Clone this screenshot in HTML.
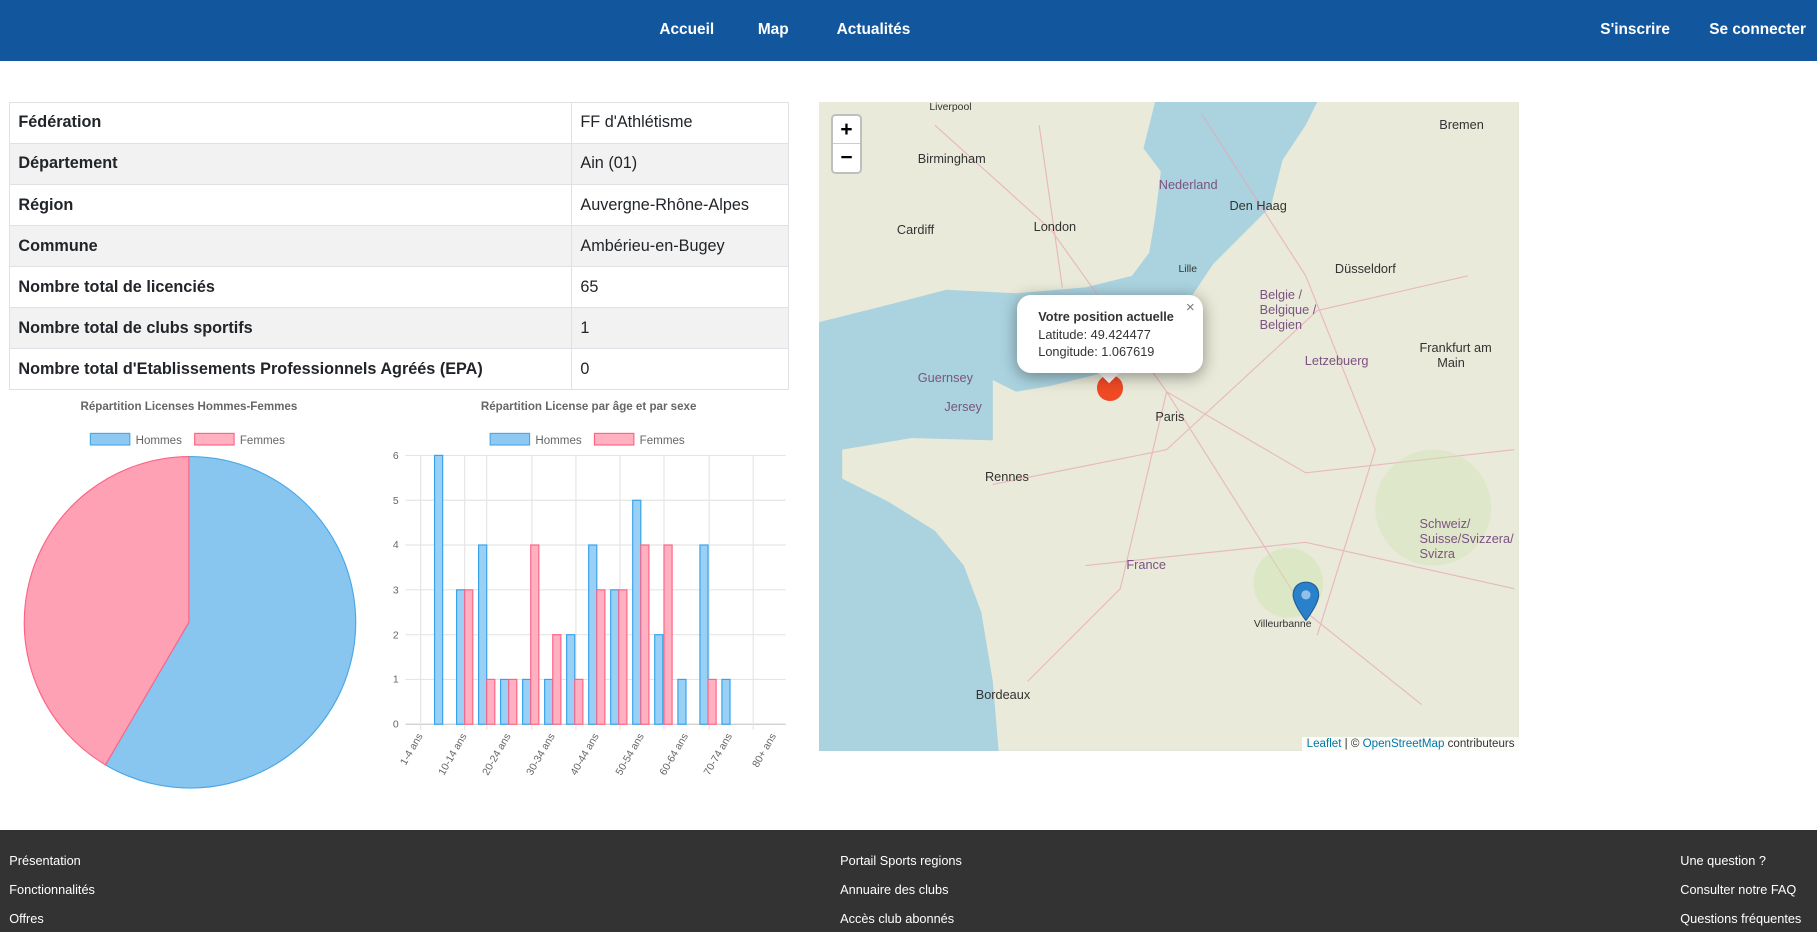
<!DOCTYPE html>
<html><head><meta charset="utf-8">
<style>
*{box-sizing:border-box;margin:0;padding:0}
html,body{width:1817px;height:932px;overflow:hidden;background:#fff}
#w{zoom:1.1588;width:1568px;height:804px;position:relative;font-family:"Liberation Sans",sans-serif;color:#212529}
.hd{position:absolute;left:0;top:0;width:1568px;height:53px;background:#12579e}
.hd a{position:absolute;top:18px;color:#fff;font-weight:bold;font-size:13.3px;text-decoration:none}
table{position:absolute;left:8px;top:88px;width:673px;border-collapse:collapse;font-size:14px}
td{border:1px solid #dee2e6;height:35.4px;padding:0 7px}
td:first-child{font-weight:bold;width:485px}
tr:nth-child(even) td{background:#f2f2f2}
.map{position:absolute;left:707px;top:88px;width:604px;height:560px;overflow:hidden;background:#aad3df}
.ft{position:absolute;left:0;top:716px;width:1568px;height:88px;background:#333}
.ft span{position:absolute;color:#fff;font-size:11px}
.lbl{position:absolute;font-size:9px;color:#333}
</style></head><body><div id="w">
<div class="hd">
<a style="left:569px">Accueil</a><a style="left:654px">Map</a><a style="left:722px">Actualités</a>
<a style="left:1381px">S'inscrire</a><a style="left:1475px">Se connecter</a>
</div>
<table>
<tr><td>Fédération</td><td>FF d'Athlétisme</td></tr>
<tr><td>Département</td><td>Ain (01)</td></tr>
<tr><td>Région</td><td>Auvergne-Rhône-Alpes</td></tr>
<tr><td>Commune</td><td>Ambérieu-en-Bugey</td></tr>
<tr><td>Nombre total de licenciés</td><td>65</td></tr>
<tr><td>Nombre total de clubs sportifs</td><td>1</td></tr>
<tr><td>Nombre total d'Etablissements Professionnels Agréés (EPA)</td><td>0</td></tr>
</table>

<svg style="position:absolute;left:0;top:340px" width="700" height="370" font-family="Liberation Sans, sans-serif">
<text x="163" y="14" text-anchor="middle" font-size="10" font-weight="bold" fill="#666">Répartition Licenses Hommes-Femmes</text>
<rect x="78" y="34" width="34" height="10" fill="#8ec9f2" stroke="#4aa8e8"/><text x="117" y="43" font-size="10" fill="#666">Hommes</text>
<rect x="168" y="34" width="34" height="10" fill="#ffb1c1" stroke="#ff6384"/><text x="207" y="43" font-size="10" fill="#666">Femmes</text>
<path d="M163,197 L163,54 A143,143 0 1,1 91,320 Z" fill="#88c6f0" stroke="#4aa8e8"/>
<path d="M163,197 L91,320 A143,143 0 0,1 163,54 Z" fill="#ffa1b5" stroke="#ff6384"/>
<text x="508" y="14" text-anchor="middle" font-size="10" font-weight="bold" fill="#666">Répartition License par âge et par sexe</text>
<rect x="423" y="34" width="34" height="10" fill="#8ec9f2" stroke="#4aa8e8"/><text x="462" y="43" font-size="10" fill="#666">Hommes</text>
<rect x="513" y="34" width="34" height="10" fill="#ffb1c1" stroke="#ff6384"/><text x="552" y="43" font-size="10" fill="#666">Femmes</text>
<g stroke="#e5e5e5">
<line x1="350" y1="53" x2="678" y2="53"/><line x1="350" y1="91.7" x2="678" y2="91.7"/><line x1="350" y1="130.3" x2="678" y2="130.3"/><line x1="350" y1="169" x2="678" y2="169"/><line x1="350" y1="207.7" x2="678" y2="207.7"/><line x1="350" y1="246.3" x2="678" y2="246.3"/><line x1="350" y1="285" x2="678" y2="285" stroke="#ccc"/>
<line x1="363" y1="53" x2="363" y2="290"/><line x1="401" y1="53" x2="401" y2="290"/><line x1="420" y1="53" x2="420" y2="290"/><line x1="459" y1="53" x2="459" y2="290"/><line x1="497" y1="53" x2="497" y2="290"/><line x1="535" y1="53" x2="535" y2="290"/><line x1="573" y1="53" x2="573" y2="290"/><line x1="612" y1="53" x2="612" y2="290"/><line x1="650" y1="53" x2="650" y2="290"/>
</g>
<g font-size="9" fill="#666" text-anchor="end">
<text x="344" y="56">6</text><text x="344" y="95">5</text><text x="344" y="133">4</text><text x="344" y="172">3</text><text x="344" y="211">2</text><text x="344" y="249">1</text><text x="344" y="288">0</text>
</g>
<g fill="#9ad0f5" stroke="#36a2eb" stroke-width="1">
<rect x="375" y="53" width="7" height="232"/><rect x="394" y="169" width="7" height="116"/><rect x="413" y="130.3" width="7" height="154.7"/><rect x="432" y="246.3" width="7" height="38.7"/><rect x="451" y="246.3" width="7" height="38.7"/><rect x="470" y="246.3" width="7" height="38.7"/><rect x="489" y="207.7" width="7" height="77.3"/><rect x="508" y="130.3" width="7" height="154.7"/><rect x="527" y="169" width="7" height="116"/><rect x="546" y="91.7" width="7" height="193.3"/><rect x="565" y="207.7" width="7" height="77.3"/><rect x="585" y="246.3" width="7" height="38.7"/><rect x="604" y="130.3" width="7" height="154.7"/><rect x="623" y="246.3" width="7" height="38.7"/>
</g>
<g fill="#ffb1c1" stroke="#ff6384" stroke-width="1">
<rect x="401" y="169" width="7" height="116"/><rect x="420" y="246.3" width="7" height="38.7"/><rect x="439" y="246.3" width="7" height="38.7"/><rect x="458" y="130.3" width="7" height="154.7"/><rect x="477" y="207.7" width="7" height="77.3"/><rect x="496" y="246.3" width="7" height="38.7"/><rect x="515" y="169" width="7" height="116"/><rect x="534" y="169" width="7" height="116"/><rect x="553" y="130.3" width="7" height="154.7"/><rect x="573" y="130.3" width="7" height="154.7"/><rect x="611" y="246.3" width="7" height="38.7"/>
</g>
<g font-size="9" fill="#666" text-anchor="end">
<text transform="translate(365,295) rotate(-60)">1-4 ans</text><text transform="translate(403,295) rotate(-60)">10-14 ans</text><text transform="translate(441,295) rotate(-60)">20-24 ans</text><text transform="translate(479,295) rotate(-60)">30-34 ans</text><text transform="translate(517,295) rotate(-60)">40-44 ans</text><text transform="translate(556,295) rotate(-60)">50-54 ans</text><text transform="translate(594,295) rotate(-60)">60-64 ans</text><text transform="translate(632,295) rotate(-60)">70-74 ans</text><text transform="translate(670,295) rotate(-60)">80+ ans</text>
</g>
</svg>

<div class="map">
<svg width="604" height="560" style="position:absolute;left:0;top:0">
<path d="M0,0 L290,0 L280,40 L295,60 L290,100 L285,130 L270,150 L230,160 L170,165 L110,162 L60,175 L20,185 L0,190 Z" fill="#e9ead9"/>
<path d="M430,0 L604,0 L604,560 L155,560 L150,500 L140,440 L125,400 L100,370 L60,345 L20,325 L20,300 L80,290 L150,292 L150,240 L170,250 L200,245 L240,235 L290,200 L320,170 L340,140 L360,120 L390,90 L400,50 L420,20 Z" fill="#e9ead9"/>
<g stroke="#e9a3b5" stroke-width="1" fill="none" opacity=".7">
<path d="M100,20 L200,110 L300,250 L420,320 L600,300"/><path d="M190,20 L210,160"/><path d="M300,250 L260,420 L180,500"/><path d="M300,250 L420,440 L520,520"/><path d="M150,330 L300,300 L430,180 L560,150"/><path d="M230,400 L420,380 L600,420"/><path d="M330,10 L420,150 L480,300 L430,460"/>
</g>
<circle cx="405" cy="415" r="30" fill="#cfe3b4" opacity=".5"/><circle cx="530" cy="350" r="50" fill="#cfe3b4" opacity=".4"/>
</svg>
<div class="lbl" style="left:95px;top:0px">Liverpool</div><div class="lbl" style="left:85px;top:42px;font-size:11px">Birmingham</div><div class="lbl" style="left:185px;top:101px;font-size:11px">London</div><div class="lbl" style="left:67px;top:104px;font-size:11px">Cardiff</div><div class="lbl" style="left:293px;top:65px;font-size:11px;color:#7b5380">Nederland</div><div class="lbl" style="left:354px;top:83px;font-size:11px">Den Haag</div><div class="lbl" style="left:445px;top:137px;font-size:11px">Düsseldorf</div><div class="lbl" style="left:380px;top:160px;font-size:11px;color:#7b5380">Belgie /<br>Belgique /<br>Belgien</div><div class="lbl" style="left:419px;top:217px;font-size:11px;color:#7b5380">Letzebuerg</div><div class="lbl" style="left:290px;top:265px;font-size:11px">Paris</div><div class="lbl" style="left:143px;top:317px;font-size:11px">Rennes</div><div class="lbl" style="left:265px;top:393px;font-size:11px;color:#7b5380">France</div><div class="lbl" style="left:85px;top:231px;font-size:11px;color:#7b5380">Guernsey</div><div class="lbl" style="left:108px;top:256px;font-size:11px;color:#7b5380">Jersey</div><div class="lbl" style="left:135px;top:505px;font-size:11px">Bordeaux</div><div class="lbl" style="left:518px;top:357px;font-size:11px;color:#7b5380">Schweiz/<br>Suisse/Svizzera/<br>Svizra</div><div class="lbl" style="left:375px;top:446px">Villeurbanne</div><div class="lbl" style="left:518px;top:205px;font-size:11px">Frankfurt am<br>&nbsp;&nbsp;&nbsp;&nbsp;&nbsp;Main</div><div class="lbl" style="left:535px;top:13px;font-size:11px">Bremen</div><div class="lbl" style="left:310px;top:140px">Lille</div>
<div style="position:absolute;left:10px;top:10px;width:27px;height:52px;background:#fff;border:2px solid rgba(0,0,0,.25);border-radius:4px;font:bold 18px 'Liberation Sans';text-align:center;line-height:24px;color:#000">+<div style="border-top:1px solid #ccc">−</div></div>
<div style="position:absolute;left:240px;top:236px;width:22px;height:22px;border-radius:50%;background:#f04a25"></div>
<svg style="position:absolute;left:408px;top:413px" width="24" height="36"><path d="M12,1 C5,1 1,6 1,12 C1,20 12,34 12,34 C12,34 23,20 23,12 C23,6 19,1 12,1 Z" fill="#2a81cb" stroke="#1f5f96"/><circle cx="12" cy="12" r="4" fill="#fff" opacity=".5"/></svg>
<div style="position:absolute;left:243px;top:226px;width:14px;height:14px;background:#fff;transform:rotate(45deg)"></div>
<div style="position:absolute;left:171px;top:167px;width:160px;height:67px;background:#fff;border-radius:12px;box-shadow:0 3px 14px rgba(0,0,0,.4);padding:11px 10px 0 18px;font-size:11px;line-height:15px;color:#333;white-space:nowrap"><b>Votre position actuelle</b><br>Latitude: 49.424477<br>Longitude: 1.067619<span style="position:absolute;right:7px;top:3px;color:#777;font-size:13px">×</span></div>
<div style="position:absolute;right:0;bottom:0;background:rgba(255,255,255,.8);font-size:10px;padding:1px 4px;color:#333"><span style="color:#0078a8">Leaflet</span> | © <span style="color:#0078a8">OpenStreetMap</span> contributeurs</div>
</div>

<div class="ft">
<span style="left:8px;top:20px">Présentation</span><span style="left:8px;top:45px">Fonctionnalités</span><span style="left:8px;top:70px">Offres</span>
<span style="left:725px;top:20px">Portail Sports regions</span><span style="left:725px;top:45px">Annuaire des clubs</span><span style="left:725px;top:70px">Accès club abonnés</span>
<span style="left:1450px;top:20px">Une question ?</span><span style="left:1450px;top:45px">Consulter notre FAQ</span><span style="left:1450px;top:70px">Questions fréquentes</span>
</div>
</div></body></html>
